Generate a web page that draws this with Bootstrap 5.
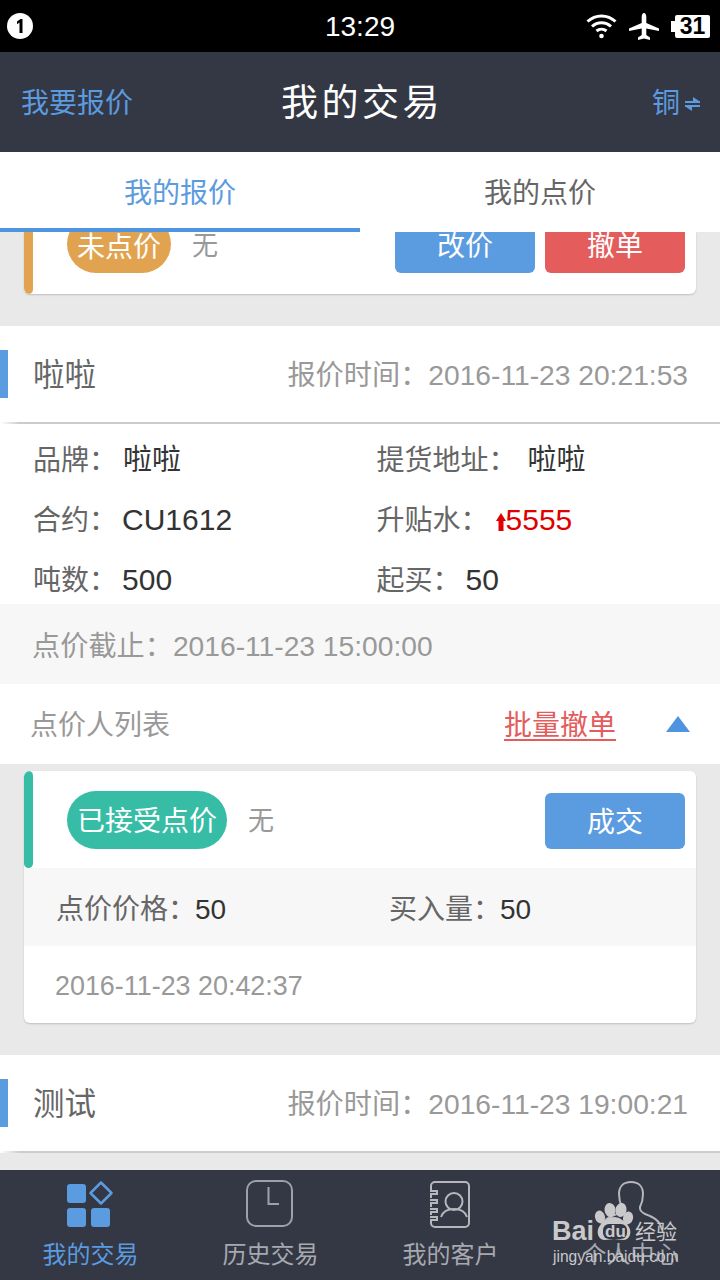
<!DOCTYPE html>
<html lang="zh">
<head>
<meta charset="utf-8">
<title>我的交易</title>
<link href="https://cdn.jsdelivr.net/npm/bootstrap@5.3.0/dist/css/bootstrap.min.css" rel="stylesheet">
<style>
html,body{margin:0;height:1280px;overflow:hidden}
body{width:720px;font-family:"Liberation Sans","Noto Sans CJK SC",sans-serif;background:#e9e9e9;color:#666}
.phone{height:1280px;width:720px;position:relative}
.sbar{height:52px;background:#000;color:#fff;padding:0 10px 0 6px}
.sbar .clock{font-size:28px;line-height:52px;position:absolute;left:0;right:0;text-align:center;top:1px}
.topnav{height:100px;background:#343844;padding:3px 20px 0 21px}
.topnav .ttl{font-size:37px;letter-spacing:3.500px;color:#fff;position:absolute;left:4px;right:0;text-align:center;top:77px;line-height:54px}
.blue{color:#5b9be0}
.f28{font-size:28px;line-height:40px}
.tabsbar{height:80px;background:#fff}
.tabitem{width:360px;height:80px;font-size:28px;line-height:80px;padding-top:2px;text-align:center;color:#666}
.tabitem.on{color:#5b9be0;position:relative}
.tabitem.on::after{content:"";position:absolute;left:0;right:0;bottom:0;height:4px;background:#4f94e0}
.scroller{height:938px;overflow:hidden}
.gcard{background:#fff;margin:0 24px;border-radius:6px;box-shadow:0 1px 2px rgba(0,0,0,.18);position:relative;overflow:hidden}
.clipcard{height:62px;margin-bottom:32px;border-radius:0 0 6px 6px}
.edge{position:absolute;left:0;top:0;width:9px;border-radius:0 0 5px 5px}
.edge.or{background:#e2a351;height:62px}
.edge.gr{background:#37bda5;height:97px;border-radius:5px}
.pill{color:#fff;border-radius:29px;font-size:28px;height:58px;line-height:58px;padding-top:2px;text-align:center}
.pill.or{background:#e2a351;width:104px;margin-left:43px;flex:none;padding-top:4px}
.pill.gr{background:#37bda5;width:160px;margin-left:43px;flex:none}
.none{font-size:26px;color:#999;margin-left:21px;padding-top:3px}
.clipnone{padding-top:0;margin-top:-5px}
.act{width:140px;height:56px;border:0;border-radius:6px;color:#fff;font-size:28px;line-height:56px;padding:2px 0 0;flex:none}
.act.bl,.act.bl:hover{background:#5b9be0;color:#fff}
.act.rd,.act.rd:hover{background:#e45c5c;color:#fff}
.cliprow{height:41px;padding-right:11px;position:relative}
.cliprow .pill{align-self:flex-end}
.sect{background:#fff}
.shead{height:96px;padding:2px 32px 0 33px;position:relative}
.shead .mark{position:absolute;left:0;top:24px;width:8px;height:48px;background:#5b9be0}
.shead .nm{font-size:31.500px;color:#666;line-height:48px}
.shead .tm{font-size:28.200px;color:#999;line-height:48px}
.rule{height:2px;background:linear-gradient(90deg,#fff 0,#ccc 20px,#ccc 100%)}
.dtl{padding:6px 0 0 33px;height:180px;align-content:flex-start;margin:0}
.dtl>div{height:60px;font-size:28px;line-height:60px;color:#666}
.dtl b{font-weight:400;color:#333;font-size:30px;margin-left:5px}
.dtl b.cn{font-size:29px;margin-left:6px}
.dtl b.cn.wide{margin-left:11px}
.dtl .up{color:#e00000;font-size:30px;margin-left:7px}
.upi{width:10px;height:18px;vertical-align:-1px;margin-right:0}
.band{background:#f7f7f7;height:80px;padding:2px 0 0 32px;font-size:28.200px;line-height:80px;color:#999}
.lst{height:80px;padding:2px 30px 0 30px;background:#fff}
.lst .lb{font-size:28px;color:#999;padding-top:2px}
.lst a{color:#e45c5c;font-size:28px;text-decoration:underline;text-underline-offset:4px;margin-right:50px;padding-top:1px}
.tri{width:24px;height:16px;flex:none;margin-top:-2px}
.well{padding:7px 0 32px;background:#e9e9e9}
.ctop{height:97px;padding-right:11px}
.ctop .act{margin-top:2px}
.inner{background:#f7f7f7;height:78px;padding:4px 0 0 32px;font-size:28px;line-height:75px;color:#666}
.inner>div{width:333px;flex:none}
.inner b{font-weight:400;color:#333;margin-left:-1px}
.cdate{height:77px;padding:3px 0 0 31px;font-size:26.900px;line-height:75px;color:#999}
.tabbar{height:110px;background:#343844;position:relative}
.tbi{width:180px;text-align:center;color:#a6a9b0;font-size:24px;padding-top:10px}
.tbi svg{display:block;margin:0 auto 6px;width:60px;height:50px;overflow:visible}
.tbi.on{color:#5b9be0}
.tbi span{display:block;line-height:38px;padding-left:1px}
.wm{position:absolute;left:552px;top:1193px;width:130px;height:80px;color:#c9c9cb;pointer-events:none}
.wm .bai{position:absolute;left:0;top:23px;font-size:27px;line-height:30px;font-weight:700}
.wm .duu{position:absolute;left:53px;top:30px;font-size:17px;line-height:18px;font-weight:700;color:#c9c9cb}
.wm .jy{position:absolute;left:83px;top:25px;font-size:21px;line-height:28px}
.wm .url{position:absolute;left:1px;top:54px;font-size:15.600px;line-height:20px;white-space:nowrap}
.wm svg{position:absolute;left:0;top:0;width:130px;height:60px}
</style>
</head>
<body>
<div class="phone">
  <div class="sbar d-flex align-items-center justify-content-between">
    <svg width="28" height="28" viewBox="0 0 28 28"><circle cx="14" cy="14" r="13" fill="#fff"/><path d="M11 9.500l3.500-2.500h2v14h-3V10.600l-2.500 1.600z" fill="#000"/></svg>
    <span class="clock">13:29</span>
    <div class="d-flex align-items-center" style="gap:12px">
      <svg width="31" height="26" viewBox="0 0 31 26" fill="none" stroke="#fff" stroke-width="3"><path d="M1.500 8.500C9.500 1 21.500 1 29.500 8.500M6 13.500c5.500-5 13.500-5 19 0M10.500 18c3-2.500 7-2.500 10 0"/><circle cx="15.500" cy="23" r="2.300" fill="#fff" stroke="none"/></svg>
      <svg width="30" height="27" viewBox="0 0 30 27" fill="#fff"><path d="M15 0c1.500 0 2.300 2 2.300 4v6L30 15.500V18l-12.700-2.500v6.500l3.700 2.500V27L15 25.500 9 27v-2.500l3.700-2.500v-6.500L0 18v-2.500L12.700 10V4c0-2 .8-4 2.300-4z"/></svg>
      <div class="d-flex align-items-center"><span class="d-block bg-white" style="width:4px;height:11px"></span><span class="d-block bg-white" style="width:35px;height:23px;color:#000;font-size:23px;font-weight:700;line-height:23px;text-align:center;border-radius:2px">31</span></div>
    </div>
  </div>
  <div class="topnav d-flex align-items-center justify-content-between">
    <span class="blue f28">我要报价</span>
    <span class="ttl">我的交易</span>
    <span class="blue f28 d-flex align-items-center" style="gap:5px">铜<svg width="15" height="14" viewBox="0 0 15 14" fill="#5b9be0"><path d="M0 4h15v2H0zM8 0l6 4H8zM0 8h15v2H0zM7 14L1 10h6z"/></svg></span>
  </div>
  <div class="tabsbar d-flex">
    <div class="tabitem on">我的报价</div>
    <div class="tabitem">我的点价</div>
  </div>
  <div class="scroller">
    <div class="gcard clipcard">
      <div class="edge or"></div>
      <div class="cliprow d-flex align-items-end">
        <div class="pill or">未点价</div>
        <span class="none clipnone align-self-start">无</span>
        <div class="ms-auto d-flex" style="gap:10px"><button class="btn act bl">改价</button><button class="btn act rd">撤单</button></div>
      </div>
    </div>

    <div class="sect">
      <div class="shead d-flex align-items-center justify-content-between">
        <i class="mark"></i><span class="nm">啦啦</span><span class="tm">报价时间：2016-11-23 20:21:53</span>
      </div>
      <div class="rule"></div>
      <div class="row g-0 dtl">
        <div class="col-6">品牌：<b class="cn">啦啦</b></div>
        <div class="col-6">提货地址：<b class="cn wide">啦啦</b></div>
        <div class="col-6">合约：<b>CU1612</b></div>
        <div class="col-6">升贴水：<span class="up"><svg class="upi" viewBox="0 0 10 18" fill="#e00000"><path d="M5 0l5 8H7.500v10h-5V8H0z"/></svg>5555</span></div>
        <div class="col-6">吨数：<b>500</b></div>
        <div class="col-6">起买：<b>50</b></div>
      </div>
      <div class="band">点价截止：2016-11-23 15:00:00</div>
      <div class="lst d-flex align-items-center">
        <span class="lb me-auto">点价人列表</span>
        <a href="#">批量撤单</a>
        <svg class="tri" viewBox="0 0 24 16"><path d="M12 0l12 16H0z" fill="#4f94e0"/></svg>
      </div>
    </div>

    <div class="well">
      <div class="gcard">
        <div class="edge gr"></div>
        <div class="ctop d-flex align-items-center">
          <div class="pill gr">已接受点价</div>
          <span class="none">无</span>
          <button class="btn act bl ms-auto">成交</button>
        </div>
        <div class="d-flex inner">
          <div>点价价格：<b>50</b></div>
          <div>买入量：<b>50</b></div>
        </div>
        <div class="cdate">2016-11-23 20:42:37</div>
      </div>
    </div>

    <div class="sect">
      <div class="shead d-flex align-items-center justify-content-between">
        <i class="mark"></i><span class="nm">测试</span><span class="tm">报价时间：2016-11-23 19:00:21</span>
      </div>
      <div class="rule"></div>
    </div>
  </div>
  <div class="tabbar d-flex">
    <div class="tbi on">
      <svg viewBox="0 0 60 50"><rect x="7" y="4" width="19" height="19" rx="3" fill="#5b9be0"/><rect x="7" y="28" width="19" height="19" rx="3" fill="#5b9be0"/><rect x="31" y="28" width="19" height="19" rx="3" fill="#5b9be0"/><path d="M41 2.500L51.500 13 41 23.500 30.500 13z" fill="none" stroke="#5b9be0" stroke-width="2.500" stroke-linejoin="round"/></svg>
      <span>我的交易</span>
    </div>
    <div class="tbi">
      <svg viewBox="0 0 60 50" fill="none" stroke="#9ea1a8" stroke-width="2"><rect x="7" y="1" width="45" height="45" rx="9"/><path d="M28.500 7v17H39"/></svg>
      <span>历史交易</span>
    </div>
    <div class="tbi">
      <svg viewBox="0 0 60 50" fill="none" stroke="#b5b7bc" stroke-width="2"><path d="M11 10V6a4 4 0 0 1 4-4h30a4 4 0 0 1 4 4v37a4 4 0 0 1-4 4H15a4 4 0 0 1-4-4v-3M11 14v4M11 23v4M11 32v3"/><path d="M10 11h7v3h-7M10 20h7v3h-7M10 29h7v3h-7M10 37h7v3h-7"/><circle cx="34" cy="21.500" r="8.500"/><path d="M21 37c2-6 7-8 13-8s11 2 13 8"/></svg>
      <span>我的客户</span>
    </div>
    <div class="tbi">
      <svg viewBox="0 0 60 50" fill="none" stroke="#b5b7bc" stroke-width="2"><path d="M31 2c-8 0-12 5-12 12 0 6 1.500 10 3 13 .5 3-1 5-5 7C9 37 2 40 0 50M31 2c8 0 12 5 12 12 0 6-1.500 10-3 13-.5 3 1 5 5 7 8 3 15 6 17 16"/></svg>
      <span>个人中心</span>
    </div>
  </div>
  <div class="wm">
    <svg viewBox="0 0 130 60" fill="#c9c9cb"><ellipse cx="48" cy="24" rx="5" ry="6.500" transform="rotate(-15 48 24)"/><ellipse cx="58" cy="17" rx="5.500" ry="7" transform="rotate(-8 58 17)"/><ellipse cx="69" cy="17" rx="5.500" ry="7" transform="rotate(10 69 17)"/><ellipse cx="76" cy="25" rx="5" ry="6.500" transform="rotate(15 76 25)"/><path d="M62 24c6 0 12 5 15 10 3 5 1 13-6 13-3 0-6-1-9-1s-6 1-9 1c-7 0-9-8-6-13 3-5 9-10 15-10z"/><rect x="51" y="31" width="24" height="15" rx="6" fill="#343844"/></svg>
    <span class="bai">Bai</span>
    <span class="duu">du</span>
    <span class="jy">经验</span>
    <span class="url">jingyan.baidu.com</span>
  </div>
</div>
</body>
</html>
